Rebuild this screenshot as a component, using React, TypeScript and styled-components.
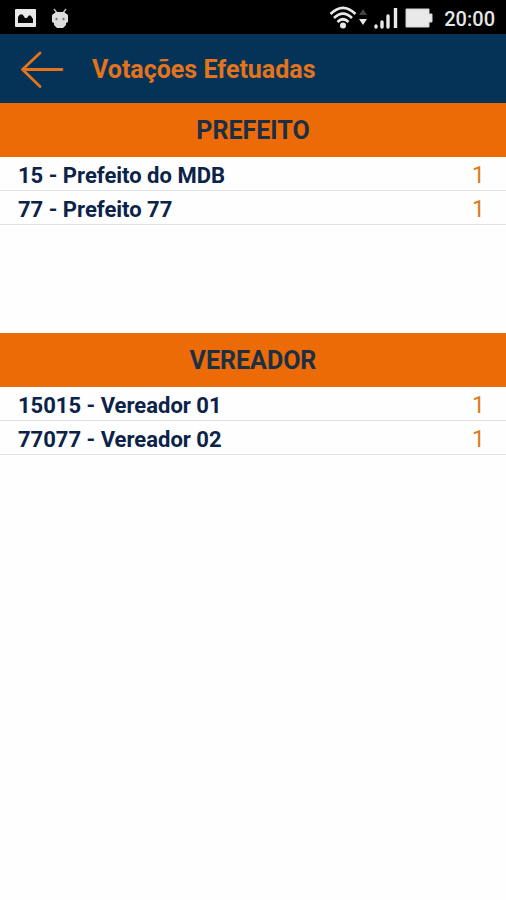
import React from "react";
import styled, { createGlobalStyle } from "styled-components";

const navy = "#053358";
const orange = "#ed6b06";

const GlobalStyle = createGlobalStyle`
  * { box-sizing: border-box; }
  body {
    margin: 0;
    background: #fefefe;
    font-family: Roboto, "Liberation Sans", sans-serif;
  }
`;

const Screen = styled.div`
  min-height: 100vh;
  display: flex;
  flex-direction: column;
`;

const StatusBar = styled.div`
  display: flex;
  align-items: center;
  justify-content: space-between;
  height: 34px;
  padding: 2px 11px 0 15px;
  background: #000;
  color: #e6e6e6;
`;

const StatusGroup = styled.div<{ $gap: number }>`
  display: flex;
  align-items: center;
  gap: ${(p) => p.$gap}px;
  svg { display: block; }
`;

const Clock = styled.time`
  font-size: 20px;
  line-height: 24px;
  font-weight: 500;
  padding: 2px 0 0 4px;
`;

const AppBar = styled.header`
  display: flex;
  align-items: center;
  gap: 28px;
  height: 69px;
  padding: 2px 20px 0;
  background: ${navy};
`;

const BackButton = styled.button`
  display: flex;
  padding: 0;
  border: 0;
  background: none;
  color: #e4741c;
  cursor: pointer;
`;

const Title = styled.h1`
  margin: 0;
  color: #e4741c;
  font-size: 25px;
  line-height: 32px;
  font-weight: 700;
`;

const Section = styled.section`
  min-height: 230px;
`;

const SectionTitle = styled.h2`
  margin: 0;
  padding: 12px 0 10px;
  background: ${orange};
  color: #1c2f45;
  font-size: 25px;
  line-height: 32px;
  font-weight: 700;
  text-align: center;
`;

const VoteTable = styled.table`
  width: 100%;
  border-collapse: separate;
  border-spacing: 0;
  font-size: 22px;
  line-height: 29px;
`;

const Candidate = styled.th`
  padding: 4px 0 0 18px;
  border-bottom: 1px solid #e2e2e2;
  color: #0b2348;
  font-weight: 700;
  text-align: left;
`;

const Count = styled.td`
  padding: 4px 21px 0 0;
  border-bottom: 1px solid #e2e2e2;
  color: #dc7a1e;
  font-size: 23px;
  text-align: right;
`;

const PictureIcon = () => (
  <svg width="21" height="18" viewBox="0 0 21 18" aria-hidden="true">
    <rect width="21" height="18" rx="1" fill="#e9e9e9" />
    <path d="M3 14V8Q5 4 8 6l2 3h2q2-4 4-2l2 3v4z" fill="#080808" />
  </svg>
);

const RobotIcon = () => (
  <svg width="18" height="21" viewBox="0 0 18 21" aria-hidden="true">
    <path d="M3 1l3 4M15 1l-3 4" stroke="#bbb" strokeWidth="1.500" />
    <path d="M1 7l4-3h8l4 3v7l-2 1v2l-3 3H6l-3-3v-2l-2-1z" fill="#ddd" />
    <circle cx="5.500" cy="11" r="1.200" fill="#777" />
    <circle cx="12.500" cy="11" r="1.200" fill="#777" />
  </svg>
);

const WifiIcon = () => (
  <svg width="38" height="24" viewBox="0 0 38 24" aria-hidden="true">
    <g fill="none" stroke="#e9e9e9" strokeWidth="2.600">
      <path d="M1.500 8Q14-4.500 26.500 8" />
      <path d="M5 12Q14 3 23 12" />
      <path d="M8.500 16Q14 10.500 19.500 16" />
    </g>
    <circle cx="14" cy="19.500" r="3" fill="#e9e9e9" />
    <path d="M30 9l4-6 4 6z" fill="#444" />
    <path d="M30 13h8l-4 6z" fill="#e9e9e9" />
  </svg>
);

const SignalIcon = () => (
  <svg width="24" height="22" viewBox="0 0 24 22" aria-hidden="true">
    <g stroke="#e9e9e9" strokeWidth="3.400" strokeLinecap="round">
      <path d="M2 19v1M8 15v5M14 9v11" />
      <path d="M21.500 1v20" strokeLinecap="butt" />
    </g>
  </svg>
);

const BatteryIcon = () => (
  <svg width="28" height="20" viewBox="0 0 28 20" aria-hidden="true">
    <path d="M1 1h23v5h3v8h-3v5H1z" fill="#e9e9e9" stroke="#d4d4d4" />
  </svg>
);

const ArrowIcon = () => (
  <svg width="44" height="38" viewBox="0 0 44 38" fill="none" stroke="currentColor" strokeWidth="2.800" strokeLinecap="round" strokeLinejoin="round" aria-hidden="true">
    <path d="M20 2L2.500 18.500L20 35.500M2.500 18.500H42" />
  </svg>
);

interface Vote {
  candidate: string;
  count: number;
}

const offices: { name: string; votes: Vote[] }[] = [
  {
    name: "PREFEITO",
    votes: [
      { candidate: "15 - Prefeito do MDB", count: 1 },
      { candidate: "77 - Prefeito 77", count: 1 },
    ],
  },
  {
    name: "VEREADOR",
    votes: [
      { candidate: "15015 - Vereador 01", count: 1 },
      { candidate: "77077 - Vereador 02", count: 1 },
    ],
  },
];

export default function App() {
  return (
    <Screen>
      <GlobalStyle />
      <StatusBar>
        <StatusGroup $gap={15}>
          <PictureIcon />
          <RobotIcon />
        </StatusGroup>
        <StatusGroup $gap={7}>
          <WifiIcon />
          <SignalIcon />
          <BatteryIcon />
          <Clock>20:00</Clock>
        </StatusGroup>
      </StatusBar>
      <AppBar>
        <BackButton type="button" aria-label="Voltar">
          <ArrowIcon />
        </BackButton>
        <Title>Votações Efetuadas</Title>
      </AppBar>
      <main>
        {offices.map((office) => (
          <Section key={office.name} aria-labelledby={office.name}>
            <SectionTitle id={office.name}>{office.name}</SectionTitle>
            <VoteTable aria-labelledby={office.name}>
              <tbody>
                {office.votes.map((vote) => (
                  <tr key={vote.candidate}>
                    <Candidate scope="row">{vote.candidate}</Candidate>
                    <Count>{vote.count}</Count>
                  </tr>
                ))}
              </tbody>
            </VoteTable>
          </Section>
        ))}
      </main>
    </Screen>
  );
}
